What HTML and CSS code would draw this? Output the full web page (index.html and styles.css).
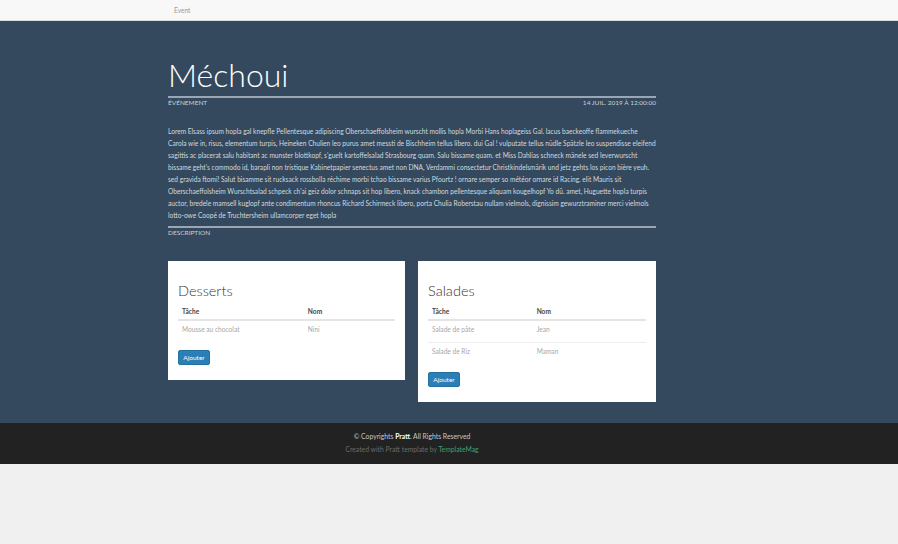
FILE: index.html
```html
<!DOCTYPE html>
<html lang="fr">
<head>
<meta charset="utf-8">
<title>Méchoui</title>
<link rel="stylesheet" href="styles.css">
</head>
<body>
<nav class="navbar">
  <div class="nav-inner"><a class="nav-link" href="#">Event</a></div>
</nav>
<section class="hero">
  <div class="container">
    <h1 class="title">Méchoui</h1>
    <div class="meta">
      <span>ÉVÉNEMENT</span>
      <span>14 JUIL. 2019 À 12:00:00</span>
    </div>
    <p class="desc">Lorem Elsass ipsum hopla gal knepfle Pellentesque adipiscing Oberschaeffolsheim wurscht mollis hopla Morbi Hans hoplageiss Gal. lacus baeckeoffe flammekueche<br>
Carola wie in, risus, elementum turpis, Heineken Chulien leo purus amet messti de Bischheim tellus libero. dui Gal ! vulputate tellus nüdle Spätzle leo suspendisse eleifend<br>
sagittis ac placerat salu habitant ac munster blottkopf, s'guelt kartoffelsalad Strasbourg quam. Salu bissame quam. et Miss Dahlias schneck mänele sed leverwurscht<br>
bissame geht's commodo id, barapli non tristique Kabinetpapier senectus amet non DNA, Verdammi consectetur Christkindelsmärik und jetz gehts los picon bière yeuh.<br>
sed gravida ftomi! Salut bisamme sit rucksack rossbolla réchime morbi tchao bissame varius Pfourtz ! ornare semper so météor ornare id Racing. elit Mauris sit<br>
Oberschaeffolsheim Wurschtsalad schpeck ch'ai geiz dolor schnaps sit hop libero, knack chambon pellentesque aliquam kougelhopf Yo dû. amet, Huguette hopla turpis<br>
auctor, bredele mamsell kuglopf ante condimentum rhoncus Richard Schirmeck libero, porta Chulia Roberstau nullam vielmols, dignissim gewurztraminer merci vielmols<br>
lotto-owe Coopé de Truchtersheim ullamcorper eget hopla</p>
    <div class="meta meta-desc"><span>DESCRIPTION</span></div>

    <div class="cards">
      <div class="card">
        <h2 class="card-title">Desserts</h2>
        <table class="tasks tasks-wide">
          <thead><tr><th>Tâche</th><th>Nom</th></tr></thead>
          <tbody>
            <tr><td>Mousse au chocolat</td><td>Nini</td></tr>
          </tbody>
        </table>
        <button class="btn">Ajouter</button>
      </div>
      <div class="card">
        <h2 class="card-title">Salades</h2>
        <table class="tasks tasks-narrow">
          <thead><tr><th>Tâche</th><th>Nom</th></tr></thead>
          <tbody>
            <tr><td>Salade de pâte</td><td>Jean</td></tr>
            <tr><td>Salade de Riz</td><td>Maman</td></tr>
          </tbody>
        </table>
        <button class="btn">Ajouter</button>
      </div>
    </div>
  </div>
</section>
<footer class="footer">
  <div class="container footer-inner">
    <p class="copy">© Copyrights <strong>Pratt</strong>. All Rights Reserved</p>
    <p class="credit">Created with Pratt template by <a href="#">TemplateMag</a></p>
  </div>
</footer>
</body>
</html>
```
FILE: styles.css
```css
* { box-sizing: border-box; }
html, body { margin: 0; padding: 0; }
body {
  background: #f0f0f0;
  font-family: Lato, "Open Sans", sans-serif;
  color: #333;
}
.navbar {
  height: 21px;
  background: #f8f8f8;
  border-bottom: 1px solid #d9dcde;
}
.nav-inner {
  margin-left: 174px;
  font-size: 6.6px;
  line-height: 20px;
}
.nav-link {
  color: #9a9a9a;
  text-decoration: none;
}
.hero {
  background: #34495e;
  padding: 34px 0 21px;
}
.container {
  margin-left: 168px;
  width: 488px;
}
.title {
  margin: 0;
  font-weight: 300;
  font-size: 32px;
  line-height: 40px;
  color: #fff;
}
.meta {
  display: flex;
  justify-content: space-between;
  border-top: 2px solid #9aa6b3;
  margin-top: 1px;
  font-size: 6.5px;
  line-height: 9px;
  color: #c9d1d9;
}
.desc {
  margin: 18px 0 0;
  font-size: 6.6px;
  line-height: 12px;
  color: #d3d9df;
  padding-bottom: 5px;
  white-space: nowrap;
}
.meta-desc { margin-top: 0; }
.cards {
  margin-top: 24px;
  display: grid;
  grid-template-columns: 237px 238px;
  column-gap: 13px;
  align-items: start;
}
.card {
  background: #fff;
  padding: 22px 10px 15px;
}
.card-title {
  margin: 0 0 4.5px;
  font-weight: 300;
  font-size: 14.5px;
  line-height: 16px;
  color: #333;
}
.tasks {
  width: 100%;
  border-collapse: collapse;
  font-size: 6.6px;
  margin-bottom: 8px;
}
.tasks-wide th:first-child { width: 58%; }
.tasks-narrow th:first-child { width: 48%; }
.tasks th {
  text-align: left;
  font-weight: 700;
  color: #444;
  padding: 3px 4px;
  line-height: 9px;
  border-bottom: 2px solid #e4e4e4;
}
.tasks td {
  color: #a8a8a8;
  padding: 2px 4px 7px;
  line-height: 12px;
  border-top: 1px solid #eeeeee;
}
.tasks tbody tr:first-child td { border-top: 0; }
.btn {
  display: block;
  background: #2a7fb6;
  color: #fff;
  border: 1px solid #24709f;
  border-radius: 2px;
  font-family: Lato, sans-serif;
  font-size: 6.5px;
  height: 15px;
  width: 32px;
  padding: 0;
}
.footer {
  background: #222222;
  padding: 7.5px 0;
}
.footer-inner { text-align: center; }
.footer p {
  margin: 0;
  font-size: 6.8px;
  line-height: 13px;
}
.copy { color: #c8c8c8; }
.copy strong { color: #fff; }
.credit { color: #6a6a6a; }
.credit a { color: #3aa079; text-decoration: none; }
```
